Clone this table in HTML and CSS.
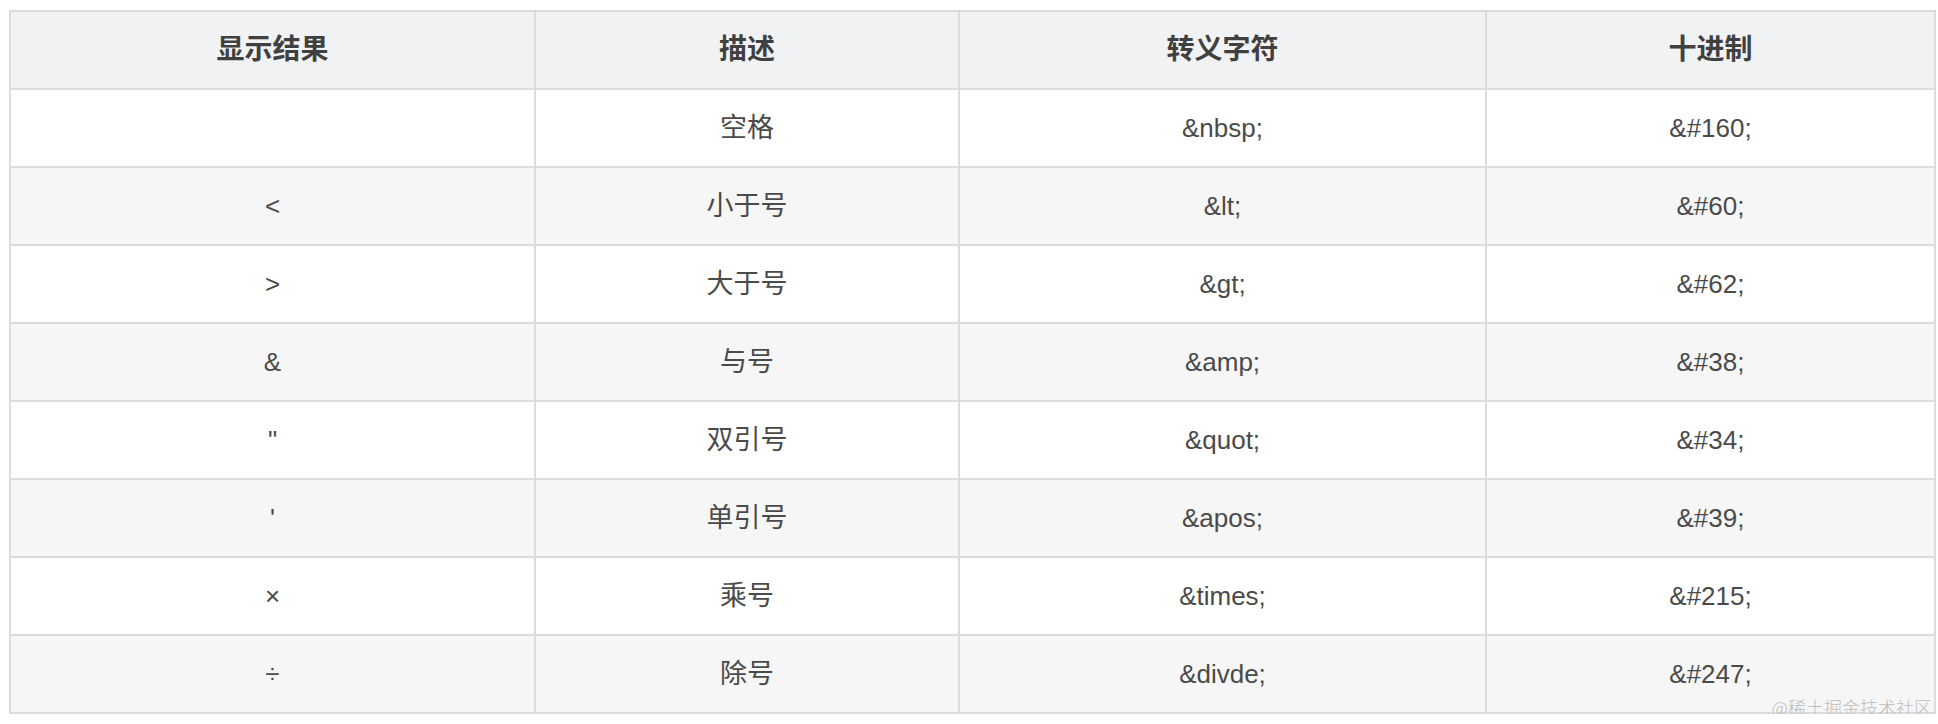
FILE: index.html
```html
<!DOCTYPE html>
<html lang="zh-CN">
<head>
<meta charset="utf-8">
<title>HTML 转义字符</title>
<link rel="stylesheet" href="styles.css">
</head>
<body>
<div class="wrap">
  <table class="entity-table">
    <colgroup>
      <col class="c1"><col class="c2"><col class="c3"><col class="c4">
    </colgroup>
    <thead>
      <tr><th>显示结果</th><th>描述</th><th>转义字符</th><th>十进制</th></tr>
    </thead>
    <tbody>
      <tr><td></td><td>空格</td><td>&amp;nbsp;</td><td>&amp;#160;</td></tr>
      <tr><td>&lt;</td><td>小于号</td><td>&amp;lt;</td><td>&amp;#60;</td></tr>
      <tr><td>&gt;</td><td>大于号</td><td>&amp;gt;</td><td>&amp;#62;</td></tr>
      <tr><td>&amp;</td><td>与号</td><td>&amp;amp;</td><td>&amp;#38;</td></tr>
      <tr><td>&quot;</td><td>双引号</td><td>&amp;quot;</td><td>&amp;#34;</td></tr>
      <tr><td>'</td><td>单引号</td><td>&amp;apos;</td><td>&amp;#39;</td></tr>
      <tr><td>&times;</td><td>乘号</td><td>&amp;times;</td><td>&amp;#215;</td></tr>
      <tr><td>&divide;</td><td>除号</td><td>&amp;divde;</td><td>&amp;#247;</td></tr>
    </tbody>
  </table>
  <div class="watermark">@稀土掘金技术社区</div>
</div>
</body>
</html>
```

FILE: styles.css
```css
html, body {
  margin: 0;
  padding: 0;
  background: #ffffff;
}

.wrap {
  position: relative;
  width: 1925px;
  margin: 10px 0 0 9px;
}

.entity-table {
  border-collapse: separate;
  border-spacing: 0;
  table-layout: fixed;
  width: 1925px;
  border-top: 2px solid #dcdcdc;
  border-left: 2px solid #dcdcdc;
  font-family: "Liberation Sans", Arial, "Noto Sans CJK SC", sans-serif;
  font-size: 26px;
  color: #4a4a4a;
}

.c1 { width: 525px; }
.c2 { width: 424px; }
.c3 { width: 527px; }
.c4 { width: 449px; }

.entity-table th,
.entity-table td {
  height: 76px;
  padding: 0;
  text-align: center;
  vertical-align: middle;
  border-right: 2px solid #dcdcdc;
  border-bottom: 2px solid #dcdcdc;
  line-height: 30px;
}

.entity-table th {
  background: #f1f2f3;
  font-weight: bold;
  font-size: 28px;
  color: #404040;
}

.entity-table td:nth-child(2) {
  font-size: 27px;
}

.entity-table tbody tr:nth-child(odd) td {
  background: #ffffff;
}

.entity-table tbody tr:nth-child(even) td {
  background: #f6f6f6;
}

.watermark {
  position: absolute;
  right: 2px;
  bottom: -3px;
  font-family: "Noto Sans CJK SC", "Liberation Serif", serif;
  font-size: 18px;
  font-weight: 300;
  line-height: 20px;
  color: #bdbdbd;
}
```
